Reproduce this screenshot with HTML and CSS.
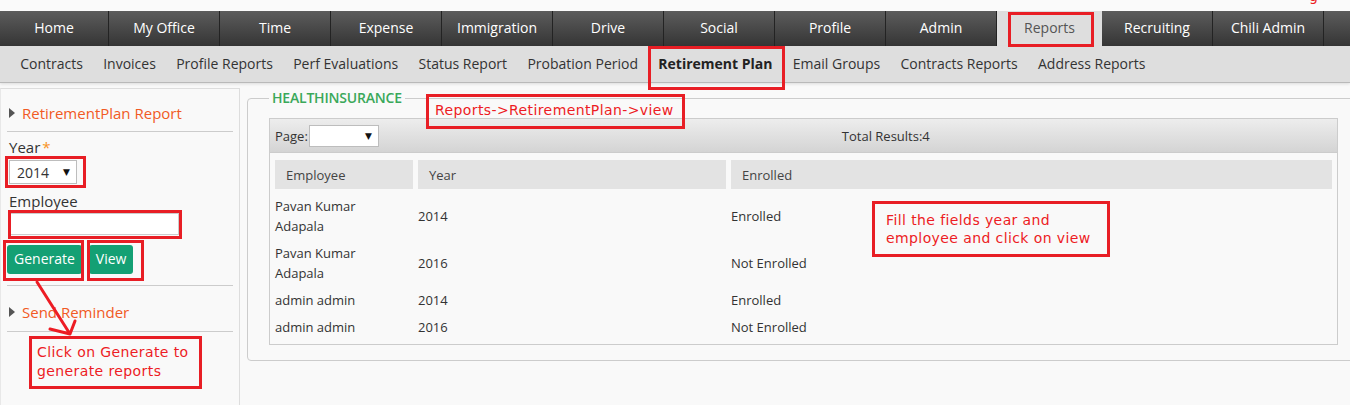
FILE: index.html
```html
<!DOCTYPE html>
<html>
<head>
<meta charset="utf-8">
<title>Retirement Plan Report</title>
<link rel="stylesheet" href="styles.css">
</head>
<body>
<div class="screen">
  <div class="topstrip"></div>
  <nav class="mainnav">
    <span class="tab tab-first">Home</span>
    <span class="tab">My Office</span>
    <span class="tab">Time</span>
    <span class="tab">Expense</span>
    <span class="tab">Immigration</span>
    <span class="tab">Drive</span>
    <span class="tab">Social</span>
    <span class="tab">Profile</span>
    <span class="tab">Admin</span>
    <span class="tab tab-active">Reports</span>
    <span class="tab">Recruiting</span>
    <span class="tab">Chili Admin</span>
    <span class="tab tab-fill"></span>
  </nav>
  <nav class="subnav">
    <span class="sub">Contracts</span>
    <span class="sub">Invoices</span>
    <span class="sub">Profile Reports</span>
    <span class="sub">Perf Evaluations</span>
    <span class="sub">Status Report</span>
    <span class="sub">Probation Period</span>
    <span class="sub sub-active">Retirement Plan</span>
    <span class="sub">Email Groups</span>
    <span class="sub">Contracts Reports</span>
    <span class="sub">Address Reports</span>
  </nav>
  <div class="page">
    <aside class="side">
      <div class="acc-head"><span class="caret"></span><span class="acc-title">RetirementPlan Report</span></div>
      <div class="form">
        <div class="lbl">Year<span class="req">*</span></div>
        <div class="select year-select"><span>2014</span><span class="arrow">&#9660;</span></div>
        <div class="lbl lbl-emp">Employee</div>
        <div class="input"></div>
        <div class="btns"><span class="btn">Generate</span><span class="btn">View</span></div>
      </div>
      <div class="acc-head acc-second"><span class="caret"></span><span class="acc-title">Send Reminder</span></div>
    </aside>
    <main class="content">
      <fieldset class="fs">
        <legend class="legend">HEALTHINSURANCE</legend>
        <div class="grid">
          <div class="grid-bar">
            <span class="page-lbl">Page:</span>
            <div class="select page-select"><span></span><span class="arrow">&#9660;</span></div>
            <span class="total">Total Results:4</span>
          </div>
          <table class="tbl">
            <colgroup><col class="c1"><col class="c2"><col></colgroup>
            <thead>
              <tr><th>Employee</th><th>Year</th><th>Enrolled</th></tr>
            </thead>
            <tbody>
              <tr><td>Pavan Kumar Adapala</td><td>2014</td><td>Enrolled</td></tr>
              <tr><td>Pavan Kumar Adapala</td><td>2016</td><td>Not Enrolled</td></tr>
              <tr><td>admin admin</td><td>2014</td><td>Enrolled</td></tr>
              <tr><td>admin admin</td><td>2016</td><td>Not Enrolled</td></tr>
            </tbody>
          </table>
        </div>
      </fieldset>
    </main>
  </div>

  <span class="note-cut">g</span>
  <div class="mark mark-reports"></div>
  <div class="mark mark-retire"></div>
  <div class="mark mark-year"></div>
  <div class="mark mark-emp"></div>
  <div class="mark mark-gen"></div>
  <div class="mark mark-view"></div>
  <div class="note note-top">Reports-&gt;RetirementPlan-&gt;view</div>
  <div class="note note-right">Fill the fields year and<br>employee and click on view</div>
  <div class="note note-left">Click on Generate to<br>generate reports</div>
  <svg class="arrow-svg" width="100" height="80" viewBox="0 270 100 80">
    <path d="M37 282 L70 334 M50 329 L70 334 M75 321 L70 334" fill="none" stroke="#ed1c24" stroke-width="3" stroke-linecap="round" stroke-linejoin="round"/>
  </svg>
</div>
</body>
</html>
```

FILE: styles.css
```css
* { box-sizing: border-box; }
html, body { margin: 0; padding: 0; }
body {
  background: #f9f9f9;
  font-family: "Open Sans", "DejaVu Sans", sans-serif;
  color: #333;
  width: 1350px;
  height: 405px;
  overflow: hidden;
}
.screen { position: relative; width: 1350px; height: 405px; overflow: hidden; }
.topstrip { height: 11px; background: #fafafa; }

/* main nav */
.mainnav {
  display: flex;
  height: 35px;
  background: linear-gradient(#5c5c5c, #353535);
}
.tab {
  flex: none;
  width: 111px;
  border-right: 1px solid #232323;
  color: #fff;
  font-size: 14px;
  line-height: 33px;
  text-align: center;
  white-space: nowrap;
}
.tab-first { width: 109px; }
.tab-active { width: 105px; background: #dedede; color: #555; border-right: none; }
.tab-fill { flex: 1; border-right: none; }

/* sub nav */
.subnav {
  position: relative;
  z-index: 1;
  display: flex;
  height: 36px;
  padding-left: 10px;
  background: #dedede;
  box-shadow: 0 1px 0 #b9b9b9, 0 2px 3px rgba(0, 0, 0, 0.12);
}
.sub {
  padding: 0 10.17px;
  font-size: 14px;
  line-height: 35px;
  color: #333;
  white-space: nowrap;
}
.sub-active { font-weight: 700; color: #222; }

/* page */
.page { display: flex; align-items: flex-start; margin-top: 6px; }
.side {
  flex: none;
  width: 240px;
  min-height: 320px;
  padding: 0 6px 0 6px;
  border-top: 1px solid #ddd;
  border-left: 1px solid #e8e8e8;
  border-right: 1px solid #ddd;
}
.acc-head {
  display: flex;
  align-items: center;
  padding: 14px 0 8px 2px;
  border-bottom: 1px solid #ccc;
}
.acc-second { padding-top: 16px; padding-bottom: 9px; }
.caret {
  width: 0;
  height: 0;
  border-left: 6px solid #555;
  border-top: 5.5px solid transparent;
  border-bottom: 5.5px solid transparent;
  margin-right: 7px;
}
.acc-title { font-size: 15px; line-height: 20px; color: #f15a24; }

.form { padding-bottom: 11px; border-bottom: 1px solid #ccc; }
.lbl { margin: 5px 0 0 2px; font-size: 15px; line-height: 20px; color: #333; }
.lbl-emp { margin-top: 7px; }
.req { color: #f7931e; margin-left: 2px; }
.select {
  display: flex;
  align-items: center;
  justify-content: space-between;
  background: #fff;
  border: 1px solid #bdbdbd;
  color: #333;
}
.year-select {
  width: 68px;
  height: 24px;
  margin: 3px 0 0 2px;
  padding: 0 6px 0 7px;
  font-size: 14px;
}
.arrow { font-size: 9px; color: #111; font-family: "DejaVu Sans", sans-serif; }
.input {
  width: 170px;
  height: 22px;
  margin: 2px 0 0 2px;
  background: #fff;
  border: 1px solid #ccc;
}
.btns { display: flex; gap: 7px; margin-top: 10px; }
.btn {
  height: 29px;
  padding: 0 7px;
  line-height: 28px;
  font-size: 14px;
  color: #fff;
  background: #14a074;
  border-radius: 3px;
}

/* content */
.content { flex: none; width: 1114px; margin-left: 7px; }
.fs {
  margin: 0;
  min-width: 0;
  width: 1114px;
  padding: 0 22px 15px 21px;
  border: 1px solid #ccc;
  border-radius: 4px;
}
.legend {
  padding: 0 3px;
  font-size: 14px;
  font-weight: 600;
  line-height: 20px;
  letter-spacing: -0.2px;
  color: #3aa85a;
}
.grid { margin-top: 10px; border: 1px solid #ccc; background: #f9f9f9; }
.grid-bar {
  display: flex;
  align-items: center;
  height: 34px;
  padding-left: 5px;
  border-bottom: 1px solid #ccc;
  background: linear-gradient(#ededed, #d4d4d4);
  font-size: 13px;
  color: #333;
}
.page-select { width: 70px; height: 22px; margin-left: 1px; padding: 0 6px; }
.total { margin-left: 463px; }
.tbl {
  width: 100%;
  table-layout: fixed;
  border-collapse: separate;
  border-spacing: 5px 7px;
  font-size: 13px;
}
.c1 { width: 138px; }
.c2 { width: 308px; }
.tbl th {
  height: 29px;
  padding: 0 0 0 11px;
  background: #e3e3e3;
  font-weight: 400;
  text-align: left;
  color: #444;
}
.tbl td { padding: 0 10px 0 0; line-height: 20px; vertical-align: middle; color: #333; }

/* annotations */
.mark { position: absolute; z-index: 5; border: 3px solid #e81e25; }
.mark-reports { left: 1008px; top: 12px; width: 86px; height: 35px; }
.mark-retire { left: 648px; top: 46px; width: 137px; height: 44px; }
.mark-year { left: 5px; top: 156px; width: 81px; height: 32px; }
.mark-emp { left: 8px; top: 210px; width: 174px; height: 29px; }
.mark-gen { left: 3px; top: 240px; width: 81px; height: 41px; }
.mark-view { left: 87px; top: 240px; width: 57px; height: 41px; }

.note {
  position: absolute;
  z-index: 5;
  border: 3px solid #e81e25;
  color: #ed1c24;
  font-family: "DejaVu Sans", sans-serif;
  font-size: 14px;
  letter-spacing: 0.4px;
  white-space: nowrap;
}
.note-top { left: 426px; top: 94px; width: 259px; height: 35px; padding: 4px 0 0 6px; line-height: 18px; }
.note-right { left: 872px; top: 201px; width: 238px; height: 56px; padding: 7px 0 0 11px; line-height: 18px; }
.note-left { left: 29px; top: 336px; width: 173px; height: 53px; padding: 4px 0 0 5px; line-height: 19px; }
.note-cut {
  position: absolute;
  z-index: 5;
  left: 1309px;
  top: -11px;
  font-family: "DejaVu Sans", sans-serif;
  font-size: 14px;
  line-height: 14px;
  color: #ed1c24;
}
.arrow-svg { position: absolute; z-index: 5; left: 0; top: 270px; }
```
